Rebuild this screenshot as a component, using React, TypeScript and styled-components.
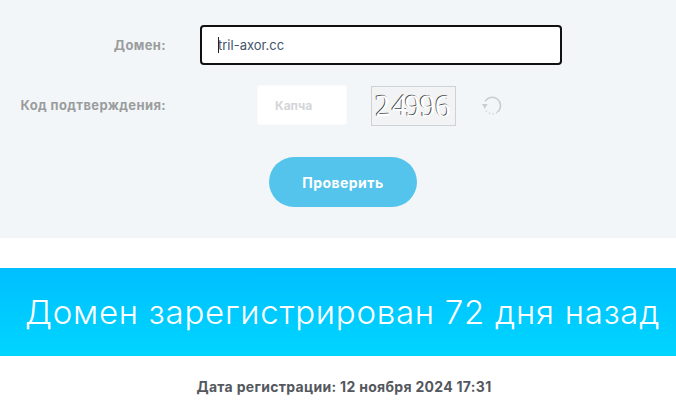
import React from "react";
import styled, { createGlobalStyle } from "styled-components";

const GlobalStyle = createGlobalStyle`
  html, body {
    margin: 0;
    padding: 0;
    background: #fff;
    font-family: Inter, "Open Sans", "Liberation Sans", sans-serif;
    overflow: hidden;
  }
`;

const FormPanel = styled.form`
  background: #f3f6f8;
  padding: 25px 0 31px;
  height: 238px;
  box-sizing: border-box;
`;

const Row = styled.div`
  display: flex;
  align-items: center;
  height: 40px;
  margin-bottom: 20px;
`;

const Label = styled.label`
  width: 166px;
  flex: none;
  text-align: right;
  font-size: 13px;
  font-weight: 700;
  color: #9a9d9e;
  letter-spacing: 0.37px;
  white-space: nowrap;
`;

const DomainField = styled.div`
  position: relative;
  margin-left: 34px;
  width: 362px;
  height: 40px;
`;

const DomainInput = styled.input`
  width: 100%;
  height: 100%;
  box-sizing: border-box;
  border: 2px solid #111;
  border-radius: 4px;
  background: #fff;
  padding: 0 16px;
  font-family: inherit;
  font-size: 13px;
  color: #44546a;
  outline: none;
`;

const Caret = styled.span`
  position: absolute;
  left: 18px;
  top: 12px;
  width: 1px;
  height: 16px;
  background: #222;
`;

const CaptchaInput = styled.input`
  margin-left: 91px;
  width: 90px;
  height: 40px;
  box-sizing: border-box;
  border: 1px solid #fafbfb;
  border-radius: 2px;
  background: #fff;
  padding: 0 17px;
  font-family: inherit;
  font-size: 12px;
  font-weight: 700;
  outline: none;

  &::placeholder {
    color: #d3d5d8;
    opacity: 1;
  }
`;

const CaptchaImage = styled.svg`
  display: block;
  margin: 1px 0 0 24px;
  width: 85px;
  height: 40px;
  box-sizing: border-box;
  border: 1px solid #cfd2d4;
  background: #f1f3f4;
`;

const ReloadIcon = styled.svg`
  display: block;
  margin: 0 0 0 25px;
  width: 22px;
  height: 22px;
`;

const SubmitRow = styled.div`
  display: flex;
  justify-content: center;
  padding: 12px 0 0 10px;
`;

const SubmitButton = styled.button`
  width: 148px;
  height: 50px;
  border: 0;
  border-radius: 25px;
  background: #54c4ec;
  color: #fff;
  font-family: inherit;
  font-size: 14px;
  font-weight: 700;
  letter-spacing: 0.45px;
`;

const Banner = styled.div`
  margin-top: 30px;
  height: 88px;
  display: flex;
  align-items: center;
  padding-left: 25px;
  background: linear-gradient(180deg, #00bfff 0%, #00d5ff 100%);
  color: #fff;
  font-size: 33px;
  font-weight: 300;
  letter-spacing: 0.75px;
  white-space: nowrap;
`;

const RegDate = styled.p`
  margin: 22px 0 0 12px;
  text-align: center;
  font-size: 14px;
  line-height: 18px;
  font-weight: 700;
  letter-spacing: 0.3px;
  color: #54585e;
`;

const digits = [
  { ch: "2", x: 3, y: 29, r: -3 },
  { ch: "4", x: 20, y: 28.5, r: 2 },
  { ch: "9", x: 33, y: 29, r: -3 },
  { ch: "9", x: 48, y: 29, r: -4 },
  { ch: "6", x: 63, y: 29.5, r: -3 },
];

const Captcha: React.FC = () => (
  <CaptchaImage viewBox="0 0 83 38">
    {digits.map((d, i) => (
      <g key={i} transform={`rotate(${d.r} ${d.x + 8} ${d.y - 11})`} fontFamily="'Liberation Serif', serif" fontSize="31">
        <text x={d.x - 0.9} y={d.y - 0.6} fill="#3f4244">
          {d.ch}
        </text>
        <text x={d.x} y={d.y} fill="#fff">
          {d.ch}
        </text>
      </g>
    ))}
  </CaptchaImage>
);

const Reload: React.FC = () => (
  <ReloadIcon viewBox="0 0 22 22" fill="none">
    <path d="M4 7.5A8.3 8.3 0 1 1 16.5 18" stroke="#c9cdd0" strokeWidth="1.5" />
    <path d="M16 18.5 A8.3 8.3 0 0 1 3.3 11.5" stroke="#c9cdd0" strokeWidth="1.5" strokeDasharray="1 2.6" />
    <path d="M0.8 10h6l-3 4.2z" fill="#c9cdd0" />
  </ReloadIcon>
);

const App: React.FC = () => (
  <>
    <GlobalStyle />
    <FormPanel onSubmit={(e) => e.preventDefault()}>
      <Row>
        <Label>Домен:</Label>
        <DomainField>
          <DomainInput defaultValue="tril-axor.cc" />
          <Caret />
        </DomainField>
      </Row>
      <Row>
        <Label>Код подтверждения:</Label>
        <CaptchaInput placeholder="Капча" />
        <Captcha />
        <Reload />
      </Row>
      <SubmitRow>
        <SubmitButton type="submit">Проверить</SubmitButton>
      </SubmitRow>
    </FormPanel>
    <Banner>Домен зарегистрирован 72 дня назад</Banner>
    <RegDate>Дата регистрации: 12 ноября 2024 17:31</RegDate>
  </>
);

export default App;
